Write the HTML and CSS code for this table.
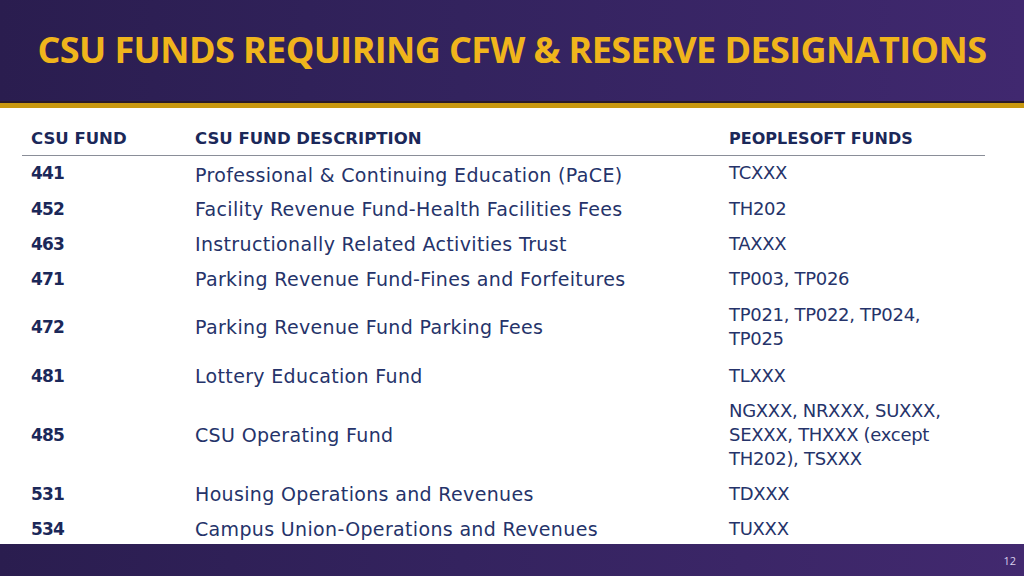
FILE: index.html
```html
<!DOCTYPE html>
<html>
<head>
<meta charset="utf-8">
<link rel="stylesheet" href="styles.css">
</head>
<body>
<div class="slide">
  <header class="banner">
    <h1 class="title">CSU FUNDS REQUIRING CFW &amp; RESERVE DESIGNATIONS</h1>
  </header>
  <div class="rule"></div>
  <main class="content">
    <table class="funds">
      <thead>
        <tr>
          <th class="c1">CSU FUND</th>
          <th class="c2">CSU FUND DESCRIPTION</th>
          <th class="c3">PEOPLESOFT FUNDS</th>
        </tr>
      </thead>
      <tbody>
        <tr class="first"><td class="c1 num up">441</td><td class="c2">Professional &amp; Continuing Education (PaCE)</td><td class="c3 up">TCXXX</td></tr>
        <tr><td class="c1 num">452</td><td class="c2">Facility Revenue Fund-Health Facilities Fees</td><td class="c3">TH202</td></tr>
        <tr><td class="c1 num">463</td><td class="c2">Instructionally Related Activities Trust</td><td class="c3">TAXXX</td></tr>
        <tr><td class="c1 num">471</td><td class="c2">Parking Revenue Fund-Fines and Forfeitures</td><td class="c3">TP003, TP026</td></tr>
        <tr class="tall"><td class="c1 num">472</td><td class="c2">Parking Revenue Fund Parking Fees</td><td class="c3">TP021, TP022, TP024,<br>TP025</td></tr>
        <tr><td class="c1 num">481</td><td class="c2">Lottery Education Fund</td><td class="c3">TLXXX</td></tr>
        <tr><td class="c1 num">485</td><td class="c2">CSU Operating Fund</td><td class="c3">NGXXX, NRXXX, SUXXX,<br>SEXXX, THXXX (except<br>TH202), TSXXX</td></tr>
        <tr><td class="c1 num">531</td><td class="c2">Housing Operations and Revenues</td><td class="c3">TDXXX</td></tr>
        <tr><td class="c1 num">534</td><td class="c2">Campus Union-Operations and Revenues</td><td class="c3">TUXXX</td></tr>
      </tbody>
    </table>
  </main>
  <footer class="footer">
    <span class="page">12</span>
  </footer>
</div>
</body>
</html>
```

FILE: styles.css
```css
html, body {
  margin: 0;
  padding: 0;
  background: #ffffff;
}

.slide {
  width: 1024px;
  height: 576px;
  display: flex;
  flex-direction: column;
  overflow: hidden;
}

.banner {
  height: 101px;
  flex-shrink: 0;
  background: linear-gradient(90deg, #2a1d4f 0%, #33235e 45%, #40286f 100%);
  display: flex;
  align-items: center;
  justify-content: center;
  border-bottom: 2px solid #2a1a2a;
}

.title {
  margin: 0;
  padding-bottom: 2px;
  font-family: "Open Sans", "Liberation Sans", sans-serif;
  font-weight: 700;
  font-size: 36px;
  letter-spacing: -0.6px;
  color: #f0b51c;
  white-space: nowrap;
}

.rule {
  height: 5px;
  flex-shrink: 0;
  background: #c9980f;
}

.content {
  flex: 1;
  min-height: 0;
  padding: 14px 39px 0 22px;
}

.funds {
  width: 963px;
  border-collapse: collapse;
  table-layout: fixed;
  font-family: "DejaVu Sans", "Open Sans", sans-serif;
  color: #1d2a5e;
}

.funds th {
  text-align: left;
  font-weight: 700;
  font-size: 16.5px;
  height: 33px;
  padding: 0;
  vertical-align: middle;
  border-bottom: 1.5px solid #8a8e98;
  color: #1b2859;
}

.funds th.c3 {
  font-size: 16px;
}

.funds td {
  font-size: 19px;
  letter-spacing: 0.34px;
  line-height: 24px;
  padding: 5.5px 0;
  vertical-align: middle;
  color: #25336a;
}

.c1 {
  width: 173px;
  padding-left: 9px !important;
  box-sizing: border-box;
}

.c2 {
  width: 534px;
}

.funds td.c3 {
  font-size: 18px;
  letter-spacing: -0.3px;
}

.funds td.num {
  font-weight: 700;
  font-size: 17px;
  letter-spacing: -0.8px;
  color: #1b2859;
}

.funds tr.first td {
  padding-top: 7px;
  padding-bottom: 4px;
}

.funds tr.first td.up {
  vertical-align: top;
  padding-top: 5px;
}

.funds tr.tall td {
  padding-top: 7px;
  padding-bottom: 7px;
}

.footer {
  height: 32px;
  flex-shrink: 0;
  background: linear-gradient(90deg, #2a1d4f 0%, #34235f 45%, #42296f 100%);
  display: flex;
  align-items: center;
  justify-content: flex-end;
  padding-right: 8px;
}

.page {
  font-family: "Open Sans", "Liberation Sans", sans-serif;
  font-size: 11px;
  color: #d8d0ec;
}
```
